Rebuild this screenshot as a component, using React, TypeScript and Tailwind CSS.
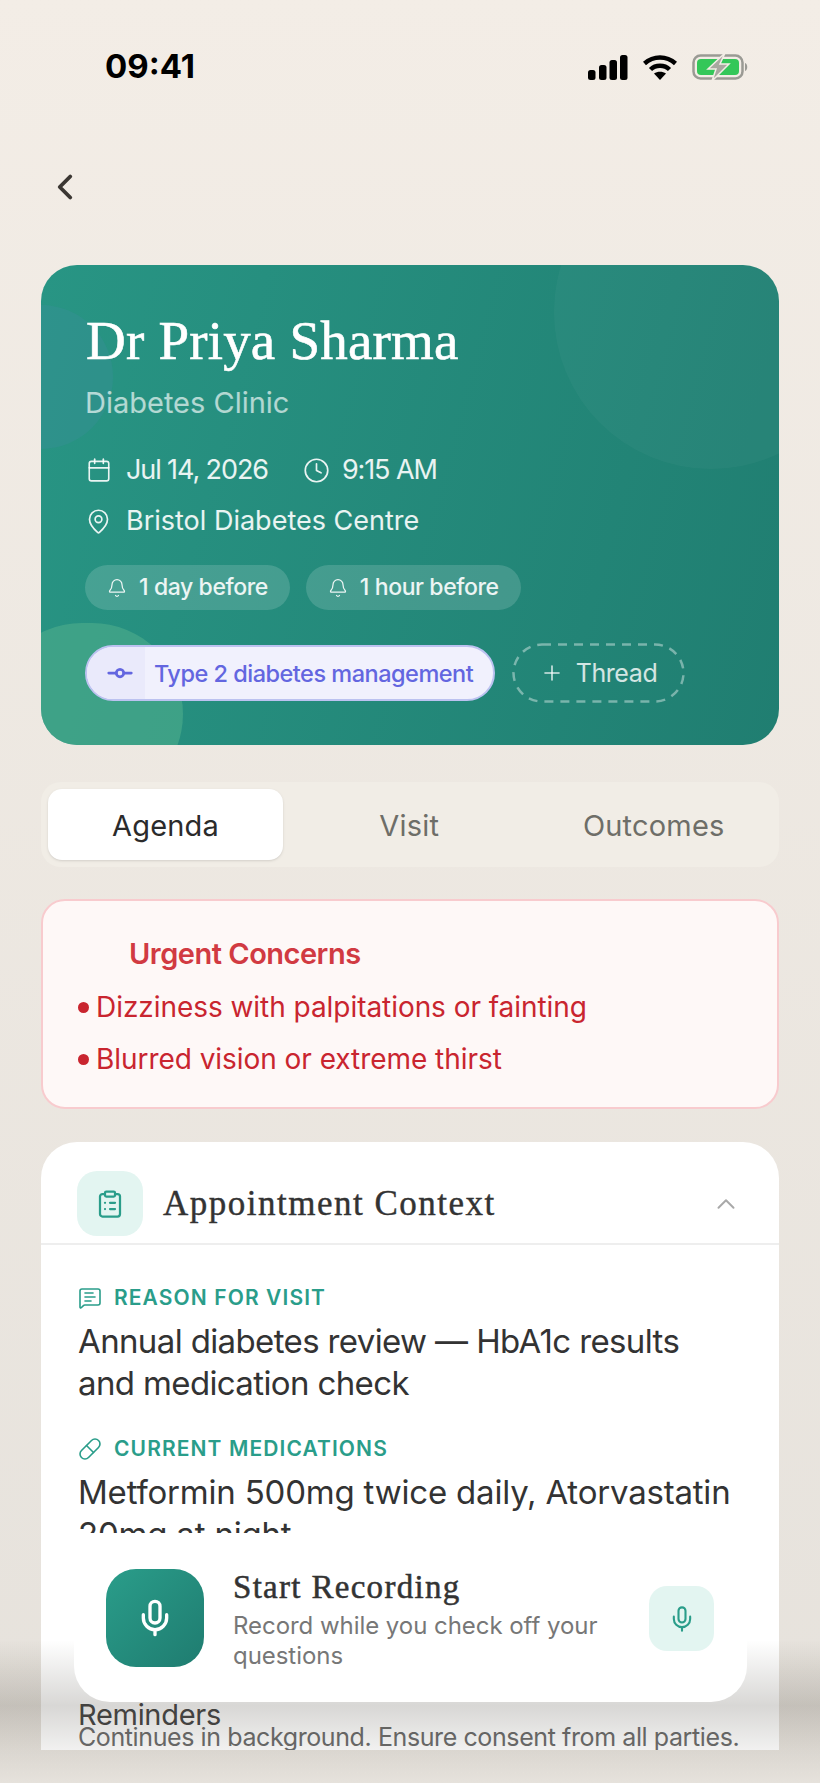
import {
  Bell,
  Calendar,
  ChevronLeft,
  ChevronUp,
  ClipboardList,
  Clock,
  GitCommitHorizontal,
  MapPin,
  MessageSquareText,
  Mic,
  Pill,
  Plus,
} from 'lucide-react'

const sans = 'font-[Inter,sans-serif]'
const serif = "font-['Liberation_Serif',serif]"

function StatusIcons() {
  return (
    <div className="flex items-center gap-[15px] pt-[6px]">
      <svg width="40" height="25" viewBox="0 0 40 25" fill="#000">
        <rect x="0" y="15" width="7.5" height="10" rx="2.5" />
        <rect x="11" y="10" width="7.5" height="15" rx="2.5" />
        <rect x="21.5" y="5" width="7.5" height="20" rx="2.5" />
        <rect x="32" y="0" width="7.5" height="25" rx="2.5" />
      </svg>
      <svg width="34" height="25" viewBox="0 0 34 25" fill="none" stroke="#000" strokeWidth="4.5">
        <path d="M1.5 8.5 C10.5 0.5 23.5 0.5 32.5 8.5" />
        <path d="M7.5 14.5 C12.5 9.5 21.5 9.5 26.5 14.5" />
        <path d="M17 25 L11 18.5 C14.5 16 19.5 16 23 18.5 Z" fill="#000" stroke="none" />
      </svg>
      <svg width="56" height="28" viewBox="0 0 56 28" fill="none">
        <rect x="1.5" y="2.5" width="49" height="23" rx="7" stroke="#9a9a94" strokeWidth="2.5" />
        <rect x="5" y="6" width="42" height="16" rx="4" fill="#34c759" />
        <path d="M53 10 C56 11 56 17 53 18 Z" fill="#9a9a94" />
        <path d="M33 0 L16 16 H24 L20 28 L37 11 H28 Z" fill="#a8a8a0" stroke="#f3ede6" strokeWidth="1.5" />
      </svg>
    </div>
  )
}

function ReminderPill({label}: {label: string}) {
  return (
    <div className="flex h-[45px] items-center gap-3 rounded-full bg-white/15 px-[22px] text-[23px] font-medium tracking-[-0.4px] text-white/90">
      <Bell size={20} strokeWidth={1.5} />
      <span>{label}</span>
    </div>
  )
}

function FieldLabel({icon: Icon, label}: any) {
  return (
    <div className="flex h-[26px] items-center gap-3 text-[21px] font-semibold tracking-[1.1px] text-[#2a9d8a]">
      <Icon size={24} strokeWidth={1.6} />
      <span>{label}</span>
    </div>
  )
}

export default function App() {
  return (
    <div className={`${sans} relative h-[1783px] w-[820px] overflow-hidden bg-gradient-to-b from-[#f3ede6] to-[#e6e2dc]`}>
      <div className="flex h-[132px] items-start justify-between pl-[105px] pr-[72px] pt-[47px]">
        <span className="text-[33px] leading-[38px] font-bold text-black">09:41</span>
        <StatusIcons />
      </div>

      <div className="flex h-[133px] items-start pl-[44px] pt-[34px] text-[#3b3733]">
        <ChevronLeft size={42} strokeWidth={2.2} />
      </div>

      <div className="mx-[41px] flex flex-col gap-[30px]">
        <section className="relative h-[480px] overflow-hidden rounded-[36px] bg-[linear-gradient(105deg,#289584,#207e71)] px-[44px] text-white">
          <div className="absolute right-[-89px] top-[-110px] h-[314px] w-[314px] rounded-full bg-white/[0.03]" />
          <div className="absolute left-[-72px] top-[40px] h-[144px] w-[144px] rounded-full bg-[#3f8fa0]/30" />
          <div className="absolute bottom-[-60px] left-[-50px] h-[182px] w-[192px] rounded-full bg-[#4fae8c]/60" />

          <div className="relative">
            <h1 className={`${serif} pl-[1px] pt-[48px] text-[55px] leading-[56px] tracking-[0.2px] [-webkit-text-stroke:0.6px_white]`}>
              Dr Priya Sharma
            </h1>
            <p className="mt-[18px] text-[29px] leading-[32px] text-white/65">Diabetes Clinic</p>

            <div className="mt-[33px] flex h-[36px] items-center text-[27px] text-white/90">
              <Calendar size={26} strokeWidth={1.5} className="ml-[1px]" />
              <span className="ml-[14px] tracking-[-1.1px]">Jul 14, 2026</span>
              <Clock size={27} strokeWidth={1.5} className="ml-[35px]" />
              <span className="ml-[12px] tracking-[-1.1px]">9:15 AM</span>
            </div>
            <div className="mt-[15px] flex h-[36px] items-center text-[27px] text-white/90">
              <MapPin size={27} strokeWidth={1.5} />
              <span className="ml-[14px]">Bristol Diabetes Centre</span>
            </div>

            <div className="mt-[26px] flex gap-4">
              <ReminderPill label="1 day before" />
              <ReminderPill label="1 hour before" />
            </div>

            <div className="mt-[33px] flex items-center gap-[17px]">
              <div className="flex h-[56px] w-[410px] items-center overflow-hidden rounded-full border-2 border-[#bcc2f0] bg-[#f1f1fd] text-[23.5px] font-medium tracking-[-0.5px] text-[#6366e0]">
                <div className="flex h-full w-[58px] items-center justify-center bg-[#eaeafb] pl-[8px]">
                  <GitCommitHorizontal size={30} strokeWidth={2.2} />
                </div>
                <span className="ml-[9px] pt-[2px]">Type 2 diabetes management</span>
              </div>
              <div className="relative flex h-[60px] w-[173px] items-center justify-center gap-[12px] text-[25px] tracking-[-0.4px] text-white/80">
                <svg className="absolute inset-0" width="173" height="60" fill="none">
                  <rect x="1.5" y="1.5" width="170" height="57" rx="28.5" stroke="#fff" strokeOpacity="0.4" strokeWidth="2.5" strokeDasharray="9 7" />
                </svg>
                <Plus size={24} strokeWidth={1.6} />
                <span className="pt-[2px]">Thread</span>
              </div>
            </div>
          </div>
        </section>

        <nav className="mt-[7px] flex h-[85px] gap-2 rounded-[20px] bg-[#f1ede6] p-[7px] text-[29px] tracking-[0.2px] text-[#6e6e68]">
          <div className="flex w-[235px] items-center justify-center rounded-[14px] bg-white pt-[3px] text-[#2b2b2b] shadow-sm">Agenda</div>
          <div className="flex flex-1 items-center justify-center pt-[3px]">Visit</div>
          <div className="flex flex-1 items-center justify-center pt-[3px]">Outcomes</div>
        </nav>

        <section className="mt-[2px] h-[210px] rounded-[24px] border-2 border-[#f8cbce] bg-[#fef8f7] pl-[35px] pt-[35px]">
          <h2 className="pl-[51px] text-[29px] leading-[36px] font-semibold tracking-[-0.5px] text-[#d13a42]">Urgent Concerns</h2>
          <ul className="mt-[17px] flex flex-col gap-[16px] text-[28px] leading-[36px] tracking-[-0.05px] text-[#c9252f]">
            <li className="flex items-center gap-[7px]">
              <span className="h-[11px] w-[11px] rounded-full bg-[#c9252f]" />
              Dizziness with palpitations or fainting
            </li>
            <li className="flex items-center gap-[7px]">
              <span className="h-[11px] w-[11px] rounded-full bg-[#c9252f]" />
              Blurred vision or extreme thirst
            </li>
          </ul>
        </section>

        <section className="mt-[3px] h-[608px] overflow-hidden rounded-t-[36px] bg-white">
          <header className="flex h-[103px] items-center border-b-2 border-[#eeeeee] pl-[36px] pr-[38px] pt-[22px]">
            <div className="flex h-[65px] w-[66px] items-center justify-center rounded-[20px] bg-[#e3f5f1] text-[#2a9d8a]">
              <ClipboardList size={30} strokeWidth={1.8} />
            </div>
            <h2 className={`${serif} ml-[20px] flex-1 pt-[2px] text-[35px] tracking-[1.5px] text-[#333] [-webkit-text-stroke:0.4px_#333]`}>
              Appointment Context
            </h2>
            <ChevronUp size={30} strokeWidth={1.6} className="text-[#a9a9a9]" />
          </header>

          <div className="h-[288px] overflow-hidden pl-[37px] pt-[40px]">
            <FieldLabel icon={MessageSquareText} label="REASON FOR VISIT" />
            <p className="mt-[10px] w-[640px] text-[33px] leading-[41.5px] tracking-[-0.63px] text-[#333]">
              Annual diabetes review — HbA1c results and medication check
            </p>
            <div className="mt-[32px]">
              <FieldLabel icon={Pill} label="CURRENT MEDICATIONS" />
            </div>
            <p className="mt-[10px] w-[665px] text-[33px] leading-[41.5px] tracking-[-0.2px] text-[#333]">
              Metformin 500mg twice daily, Atorvastatin 20mg at night
            </p>
          </div>

          <div className="pl-[37px] pt-[165px]">
            <p className="text-[29px] leading-[34px] tracking-[-0.3px] text-[#444]">Reminders</p>
            <p className="-mt-[10px] whitespace-nowrap text-[25px] leading-[30px] tracking-[-0.4px] text-[#6b6b6b]">
              Continues in background. Ensure consent from all parties.
            </p>
          </div>
        </section>
      </div>

      {/* shadow fade under the recording bar */}
      <div className="absolute bottom-0 left-0 right-0 h-[143px] bg-[linear-gradient(to_bottom,rgba(60,55,45,0)_0%,rgba(60,55,45,0.2)_46%,rgba(60,55,45,0.07)_77%,rgba(60,55,45,0)_100%)]" />

      <div className="absolute left-[74px] top-[1540px] flex h-[162px] w-[673px] items-start rounded-[36px] bg-white pl-[32px] pr-[33px] pt-[29px]">
        <div className="flex h-[98px] w-[98px] shrink-0 items-center justify-center rounded-[30px] bg-gradient-to-br from-[#2a9d8a] to-[#1f7c70] text-white">
          <Mic size={40} strokeWidth={2} />
        </div>
        <div className="ml-[29px] flex-1">
          <h3 className={`${serif} text-[33px] leading-[36px] tracking-[1.3px] text-[#333] [-webkit-text-stroke:0.5px_#333]`}>
            Start Recording
          </h3>
          <p className="mt-[6px] w-[390px] text-[24px] leading-[30px] tracking-[-0.05px] text-[#777]">
            Record while you check off your questions
          </p>
        </div>
        <div className="mt-[17px] flex h-[65px] w-[65px] shrink-0 items-center justify-center rounded-[18px] bg-[#e3f5f1] text-[#2a9d8a]">
          <Mic size={28} strokeWidth={1.8} />
        </div>
      </div>
    </div>
  )
}
